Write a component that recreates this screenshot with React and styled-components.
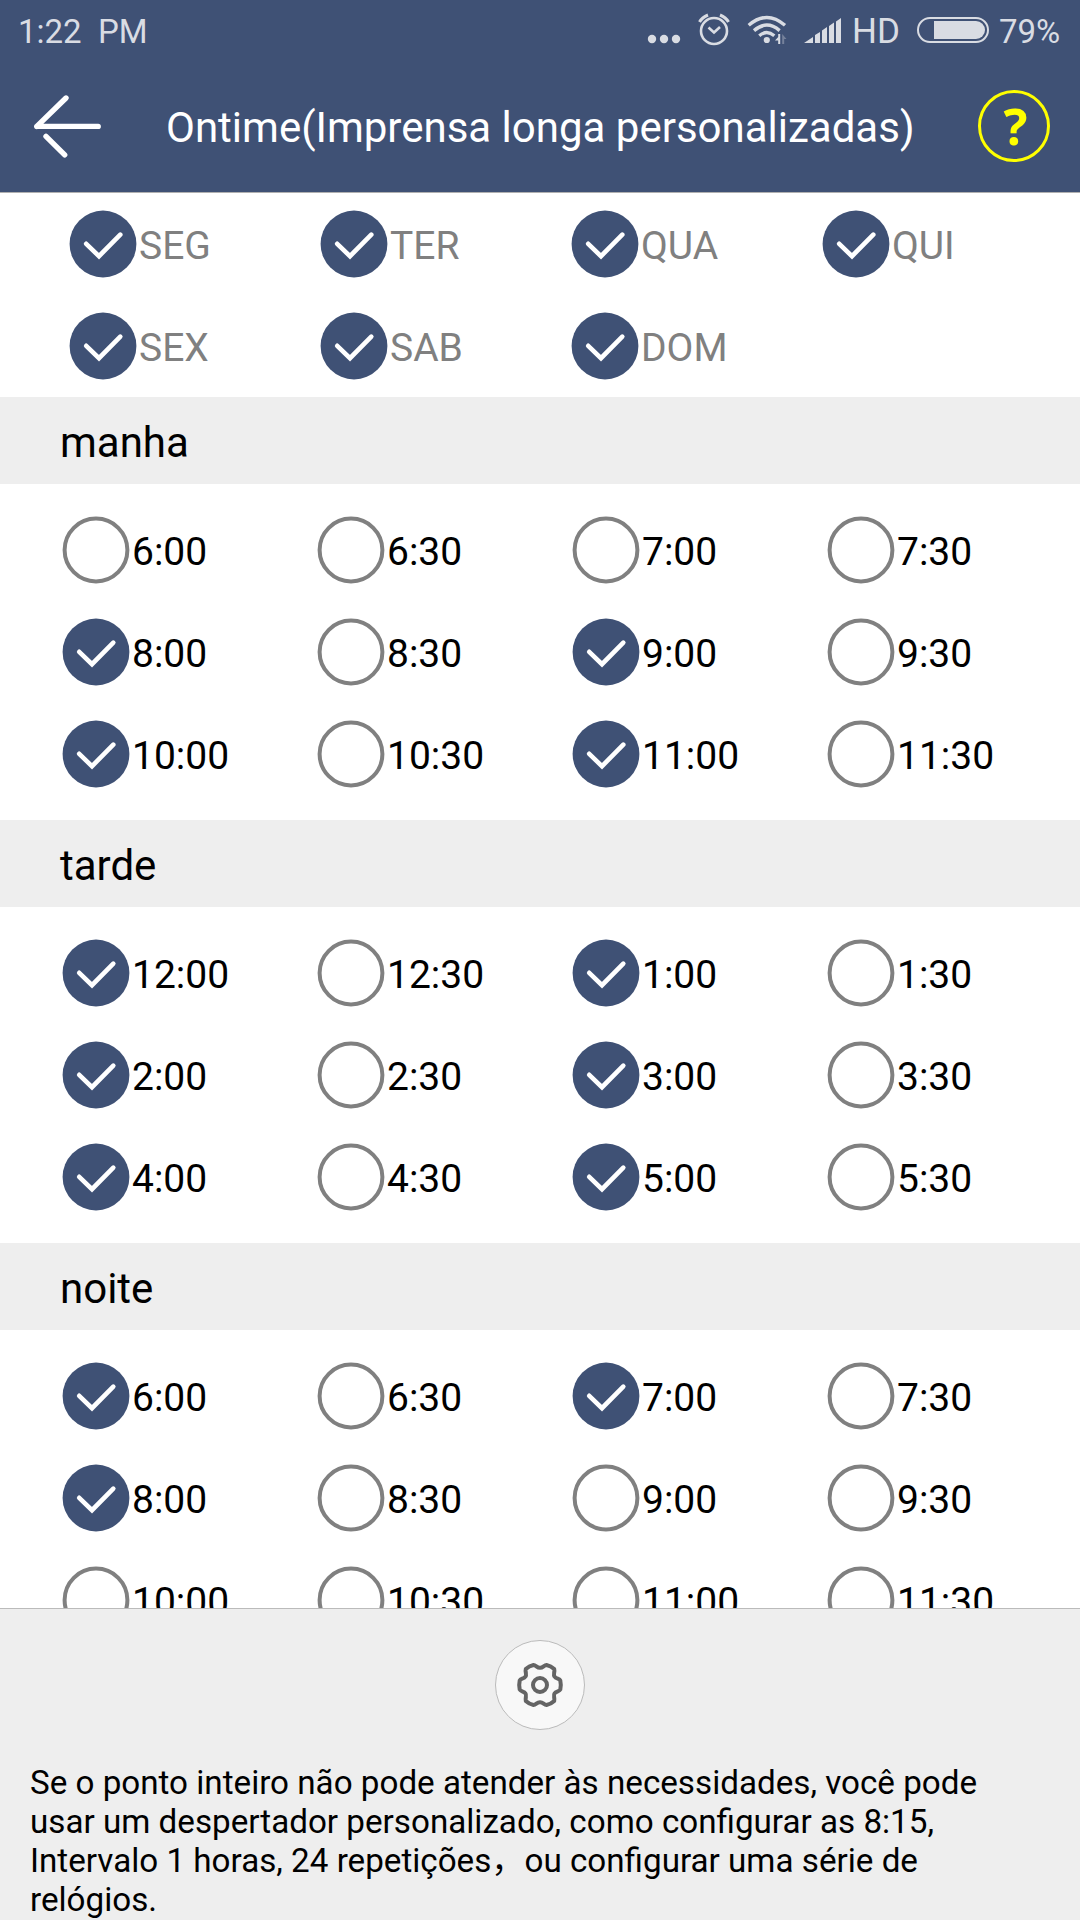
import React from 'react';
import styled, { createGlobalStyle } from 'styled-components';

const days = ['SEG', 'TER', 'QUA', 'QUI', 'SEX', 'SAB', 'DOM'];

const sections = [
    {
        title: 'manha',
        times: ['6:00', '6:30', '7:00', '7:30', '8:00', '8:30', '9:00', '9:30', '10:00', '10:30', '11:00', '11:30'],
        selected: ['8:00', '9:00', '10:00', '11:00']
    },
    {
        title: 'tarde',
        times: ['12:00', '12:30', '1:00', '1:30', '2:00', '2:30', '3:00', '3:30', '4:00', '4:30', '5:00', '5:30'],
        selected: ['12:00', '1:00', '2:00', '3:00', '4:00', '5:00']
    },
    {
        title: 'noite',
        times: ['6:00', '6:30', '7:00', '7:30', '8:00', '8:30', '9:00', '9:30', '10:00', '10:30', '11:00', '11:30'],
        selected: ['6:00', '7:00', '8:00']
    }
];

const CheckCircle = ({ checked }) => (
    <svg width="68" height="68" viewBox="0 0 68 68">
        {checked ? (
            <>
                <circle cx="34" cy="34" r="33.4" fill="#3f5175" />
                <path d="M17.2 33.8 L30 46.2 L51.3 24.7" fill="none" stroke="#fff" strokeWidth="4.6" strokeLinecap="round" />
            </>
        ) : (
            <circle cx="34" cy="34" r="31.4" fill="#fff" stroke="#808080" strokeWidth="4" />
        )}
    </svg>
);

const StatusIcons = () => (
    <svg width="208" height="50" viewBox="640 8 208 50" fill="#d9dce3">
        <circle cx="652" cy="39" r="4.2" />
        <circle cx="664" cy="39" r="4.2" />
        <circle cx="676" cy="39" r="4.2" />
        <g fill="none" stroke="#d9dce3">
            <circle cx="714" cy="31" r="13" strokeWidth="2.6" />
            <path d="M708.5 27.5 L714 32.5 L720 27" strokeWidth="2.6" />
            <path d="M699.5 22 Q702 17.5 708 15 M728.5 22 Q726 17.5 720 15" strokeWidth="3" />
            <path d="M748.7 25.3 Q766.8 9.6 785 25.3" strokeWidth="3.4" />
            <path d="M754 30.6 Q766.8 19.6 779.6 30.6" strokeWidth="3.4" />
            <path d="M759.3 35.7 Q766.8 29.4 774.3 35.7" strokeWidth="3.4" />
        </g>
        <circle cx="766.8" cy="40" r="3.1" />
        <path d="M778.2 34 H780.2 V44 H778.2 V40.5 H775 L778.2 37 Z" />
        <path d="M782.2 34 L786.5 39 H784.2 V44 H782.2 Z" opacity=".35" />
        <path d="M804 43 L813 37 V43 Z M815 35 L820 32 V43 H815 Z M822 30.5 L827 27 V43 H822 Z M829 26 L834 22.5 V43 H829 Z M836 21.5 L841 18 V43 H836 Z" />
    </svg>
);

const Battery = () => (
    <svg width="72" height="26" viewBox="0 0 72 26">
        <rect x="1" y="1" width="70" height="24" rx="12" fill="none" stroke="#d9dce3" strokeWidth="2" />
        <path d="M17 4 H59 A9 9 0 0 1 59 22 H17 Z" fill="#d9dce3" />
    </svg>
);

const BackArrow = () => (
    <svg width="70" height="66" viewBox="0 0 70 66" fill="none" stroke="#fff" strokeWidth="5.4" strokeLinecap="round" strokeLinejoin="round">
        <path d="M66.200 33.4 H4.8 M4.8 33.4 L34 5 M14 43.3 L32.7 61.9" />
    </svg>
);

const Gear = () => (
    <svg width="48" height="48" viewBox="-24 -24 48 48" fill="none" stroke="#646464" strokeWidth="4" strokeLinejoin="round">
        <circle r="7" />
        <path d="M0 -17.2 C3 -17 4 -20 6.500 -20 Q11 -19 14.200 -16 C15 -13 13 -10.500 14.500 -8.500 C16 -6 19.500 -6.500 20.300 -4.500 Q21.300 0 20.300 4.500 C19.500 6.500 16 6 14.500 8.500 C13 10.500 15 13 14.200 16 Q11 19 6.500 20 C4 20 3 17 0 17.200 C-3 17 -4 20 -6.500 20 Q-11 19 -14.200 16 C-15 13 -13 10.500 -14.500 8.500 C-16 6 -19.500 6.500 -20.300 4.500 Q-21.300 0 -20.300 -4.500 C-19.500 -6.500 -16 -6 -14.500 -8.500 C-13 -10.500 -15 -13 -14.200 -16 Q-11 -19 -6.500 -20 C-4 -20 -3 -17 0 -17.200 Z" />
    </svg>
);

const App = () => {
    return (
        <Screen>
            <GlobalStyle />
            <StatusBar>
                <Clock>1:22&nbsp; PM</Clock>
                <StatusIcons />
                <Network>HD</Network>
                <Battery />
                <Percent>79%</Percent>
            </StatusBar>
            <Header>
                <BackArrow />
                <Title>Ontime(Imprensa longa personalizadas)</Title>
                <Help>?</Help>
            </Header>
            <Content>
                <DayGrid>
                    {
                        days.map(day =>
                            <Option key={day} $muted>
                                <CheckCircle checked />
                                <span>{day}</span>
                            </Option>
                        )
                    }
                </DayGrid>
                {
                    sections.map(({ title, times, selected }) =>
                        <React.Fragment key={title}>
                            <SectionTitle>{title}</SectionTitle>
                            <TimeGrid>
                                {
                                    times.map(time =>
                                        <Option key={time}>
                                            <CheckCircle checked={selected.includes(time)} />
                                            <span>{time}</span>
                                        </Option>
                                    )
                                }
                            </TimeGrid>
                        </React.Fragment>
                    )
                }
            </Content>
            <Footer>
                <SettingsButton>
                    <Gear />
                </SettingsButton>
                <Note>
                    Se o ponto inteiro não pode atender às necessidades, você pode
                    usar um despertador personalizado, como configurar as 8:15,
                    Intervalo 1 horas, 24 repetições，ou configurar uma série de
                    relógios.
                </Note>
            </Footer>
        </Screen>
    )
}

export default App;


const GlobalStyle = createGlobalStyle`
  * {
    box-sizing: border-box;
  }
  body {
    margin: 0;
    font-family: Roboto, "Noto Sans CJK SC", sans-serif;
  }
  svg {
    display: block;
    flex: none;
  }
`

const Screen = styled.div`
  width: 1080px;
  height: 1920px;
  display: flex;
  flex-direction: column;
  overflow: hidden;
  background: #fff;
  color: #000;
`

const StatusBar = styled.div`
  height: 60px;
  flex: none;
  display: flex;
  align-items: flex-start;
  padding: 8px 0 0 18px;
  background: #3f5175;
  color: #d9dce3;
  font-size: 33px;
  line-height: 48px;
  white-space: nowrap;

  svg:last-of-type {
    margin-top: 9px;
  }
`

const Clock = styled.span`
  width: 622px;
`

const Network = styled.span`
  width: 69px;
  padding-left: 4px;
  font-size: 35px;
`

const Percent = styled.span`
  padding-left: 10px;
`

const Header = styled.div`
  height: 133px;
  flex: none;
  display: flex;
  align-items: center;
  padding: 0 30px 0 32px;
  background: #3f5175;
  border-bottom: 1px solid #b0b0b0;
`

const Title = styled.h1`
  margin: 0 auto 0 64px;
  padding-top: 2px;
  color: #fff;
  font-size: 42px;
  font-weight: 400;
  white-space: nowrap;
`

const Help = styled.div`
  width: 72px;
  height: 72px;
  padding-left: 3px;
  border: 3px solid #ff0;
  border-radius: 50%;
  color: #ff0;
  font-family: "Noto Sans", sans-serif;
  font-size: 50px;
  font-weight: 700;
  line-height: 67px;
  text-align: center;
`

const Content = styled.div`
  height: 1415px;
  flex: none;
  overflow: hidden;
`

const DayGrid = styled.div`
  display: grid;
  grid-template-columns: repeat(4, 251px);
  grid-auto-rows: 102px;
  padding-left: 69px;
`

const TimeGrid = styled.div`
  display: grid;
  grid-template-columns: repeat(4, 255px);
  grid-auto-rows: 102px;
  padding: 15px 0 15px 62px;
`

const Option = styled.div`
  display: flex;
  align-items: center;
  gap: 2px;
  color: ${({ $muted }) => ($muted ? '#808080' : '#000')};
  font-size: 39px;

  span {
    padding-top: 4px;
  }
`

const SectionTitle = styled.h2`
  height: 87px;
  margin: 0;
  padding: 4px 0 0 60px;
  background: #eee;
  font-size: 42px;
  font-weight: 400;
  line-height: 84px;
`

const Footer = styled.div`
  flex: 1;
  padding: 31px 30px 0;
  background: #eee;
  border-top: 1px solid #bbb;
`

const SettingsButton = styled.div`
  width: 90px;
  height: 90px;
  display: flex;
  align-items: center;
  justify-content: center;
  margin: 0 auto 33px;
  border: 1px solid #bbb;
  border-radius: 50%;
  background: #f8f8f8;
`

const Note = styled.p`
  margin: 0;
  padding-right: 30px;
  font-size: 33.2px;
  line-height: 39px;
`
